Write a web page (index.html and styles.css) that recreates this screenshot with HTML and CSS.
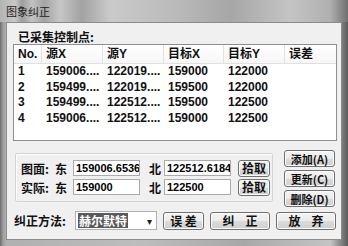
FILE: index.html
```html
<!DOCTYPE html>
<html lang="zh">
<head>
	<meta charset="UTF-8">
	<title>图象纠正</title>
	<link rel="stylesheet" href="styles.css">
</head>
<body>
	<div class="window">
		<div class="titlebar">图象纠正</div>
		<div class="client">
			<div class="caption">已采集控制点:</div>
			<div class="list">
				<div class="row head">
					<span class="c0">No.</span><span class="c1">源X</span><span class="c2">源Y</span><span class="c3">目标X</span><span class="c4">目标Y</span><span class="c5">误差</span>
				</div>
				<div class="row">
					<span class="c0">1</span><span class="c1">159006....</span><span class="c2">122019....</span><span class="c3">159000</span><span class="c4">122000</span><span class="c5"></span>
				</div>
				<div class="row">
					<span class="c0">2</span><span class="c1">159499....</span><span class="c2">122019....</span><span class="c3">159500</span><span class="c4">122000</span><span class="c5"></span>
				</div>
				<div class="row">
					<span class="c0">3</span><span class="c1">159499....</span><span class="c2">122512....</span><span class="c3">159500</span><span class="c4">122500</span><span class="c5"></span>
				</div>
				<div class="row">
					<span class="c0">4</span><span class="c1">159006....</span><span class="c2">122512....</span><span class="c3">159000</span><span class="c4">122500</span><span class="c5"></span>
				</div>
			</div>
			<div class="middle">
				<div class="group">
					<div class="line">
						<span class="lbl">图面:</span><span class="dir">东</span>
						<div class="field">159006.6536</div>
						<span class="dir dir2">北</span>
						<div class="field">122512.6184</div>
						<button class="btn pick">拾取</button>
					</div>
					<div class="line">
						<span class="lbl">实际:</span><span class="dir">东</span>
						<div class="field">159000</div>
						<span class="dir dir2">北</span>
						<div class="field">122500</div>
						<button class="btn pick">拾取</button>
					</div>
				</div>
				<div class="side">
					<button class="btn">添加(A)</button>
					<button class="btn">更新(C)</button>
					<button class="btn">删除(D)</button>
				</div>
			</div>
			<div class="bottom">
				<span class="method">纠正方法:</span>
				<div class="combo"><span class="sel">赫尔默特</span><span class="arrow">▾</span></div>
				<button class="btn err">误 差</button>
				<button class="btn big">纠&nbsp;&nbsp;&nbsp;&nbsp;正</button>
				<button class="btn big">放&nbsp;&nbsp;&nbsp;&nbsp;弃</button>
			</div>
		</div>
	</div>
</body>
</html>
```
FILE: styles.css
```css
body {
	margin: 0px;
	background: #8a8a8a;
	font-family: "Noto Sans CJK SC", "DejaVu Sans", sans-serif;
}
.window {
	width: 348px;
	height: 246px;
	overflow: hidden;
	background: linear-gradient(90deg, #6c6c6c 0px, #9c9c9c 3px, #b0b0b0 6px, #bdbdbd 40%, #a8a8a8 70%, #c4c4c4 95%, #5a5a5a 100%);
}
.titlebar {
	height: 22px;
	padding-left: 6px;
	line-height: 22px;
	font-size: 11px;
	color: #222;
	background: linear-gradient(90deg, #b4b4b4 0px, #c8c8c8 15px, #9e9e9e 22px, #c2c2c2 32px, #a4a4a4 44px, #c6c6c6 60px, #a2a2a2 82px, #cacaca 110px, #b9b9b9 180px, #a6a6a6 230px, #c4c4c4 290px, #b0b0b0 330px, #707070 348px);
}
.client {
	margin: 0px 6px 0px 6px;
	height: 218px;
	background: #f0f0f0;
	border: 1px solid #8c8c8c;
	box-sizing: border-box;
	padding: 0px 4px 0px 6px;
	color: #111;
	font-size: 12px;
	font-weight: bold;
}
.caption {
	height: 21px;
	line-height: 27px;
	padding-left: 5px;
}
.list {
	height: 97px;
	background: #fff;
	border: 1px solid #8e8e8e;
	box-sizing: border-box;
	font-family: "Liberation Sans", "Noto Sans CJK SC", sans-serif;
}
.row {
	display: flex;
	height: 15.5px;
	line-height: 15.5px;
}
.row.head {
	height: 18px;
	line-height: 18px;
	border-bottom: 1px solid #e0e0e0;
	background: linear-gradient(#fff, #f6f6f6);
}
.row span {
	box-sizing: border-box;
	padding-left: 4px;
	white-space: nowrap;
	overflow: hidden;
}
.row.head span {
	border-right: 1px solid #e2e2e2;
}
.row.head span.c5 {
	border-right: none;
}
.c0 { width: 28px; }
.c1 { width: 61px; }
.c2 { width: 61px; }
.c3 { width: 60px; }
.c4 { width: 61px; }
.c5 { flex: 1; }
.middle {
	display: flex;
	margin-top: 9px;
}
.group {
	margin-top: 3px;
	margin-left: 2px;
	width: 258px;
	height: 49px;
	box-sizing: border-box;
	border: 1px solid #d4d4d4;
	border-radius: 2px;
	box-shadow: inset 1px 1px 0px #fff;
	padding: 6px 0px 0px 5px;
}
.line {
	display: flex;
	align-items: center;
	height: 16px;
	margin-bottom: 3px;
}
.lbl {
	width: 34px;
}
.dir {
	width: 18px;
}
.dir2 {
	margin-left: 9px;
	width: 15px;
}
.field {
	width: 67px;
	height: 16px;
	box-sizing: border-box;
	background: #fff;
	border: 1px solid #ababab;
	padding-left: 2px;
	line-height: 14px;
	font-family: "Liberation Sans", sans-serif;
	color: #000;
	font-size: 11px;
	overflow: hidden;
	white-space: nowrap;
}
.btn {
	font-family: "Noto Sans CJK SC", "DejaVu Sans", sans-serif;
	font-weight: bold;
	font-size: 12px;
	color: #111;
	background: linear-gradient(#f4f4f4 0%, #ebebeb 50%, #dcdcdc 51%, #cfcfcf 100%);
	border: 1px solid #707070;
	border-radius: 3px;
	box-shadow: inset 0px 0px 0px 1px #fcfcfc;
	padding: 0px;
	line-height: 14px;
}
.pick {
	margin-left: 7px;
	width: 32px;
	height: 17px;
}
.side {
	display: flex;
	flex-direction: column;
	gap: 3px;
	margin-left: 11px;
}
.side .btn {
	width: 51px;
	height: 17px;
	font-size: 11px;
}
.bottom {
	display: flex;
	align-items: center;
	margin-top: 4px;
}
.method {
	width: 61px;
	padding-left: 1px;
}
.combo {
	display: flex;
	align-items: center;
	width: 82px;
	height: 19px;
	box-sizing: border-box;
	background: #fff;
	border: 1px solid #b0b0b0;
	padding-left: 2px;
}
.sel {
	background: #5a5a5a;
	color: #fff;
	line-height: 15px;
	padding: 0px 1px;
}
.arrow {
	margin-left: auto;
	margin-right: 4px;
	font-size: 10px;
	color: #222;
}
.err {
	margin-left: 6px;
	width: 41px;
	height: 18px;
}
.big {
	margin-left: 6px;
	width: 60px;
	height: 18px;
}
```
